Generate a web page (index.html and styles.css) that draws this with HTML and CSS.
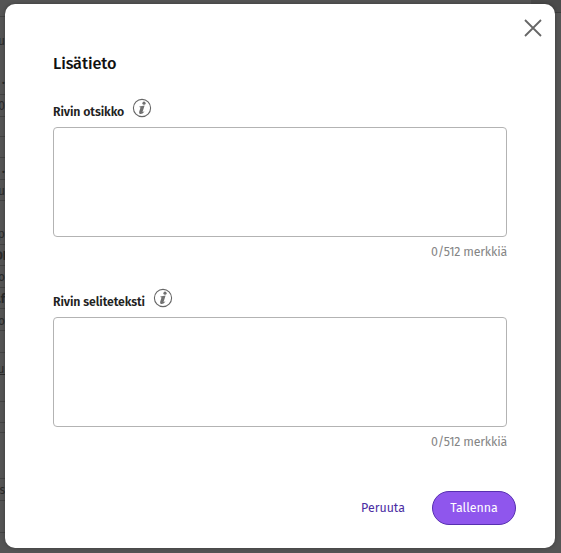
FILE: index.html
```
<!DOCTYPE html>
<html lang="fi">
<head>
    <meta charset="UTF-8">
    <title>Lisätieto</title>
    <link rel="stylesheet" href="styles.css">
</head>
<body>
    <div class="page">
        <div class="rows">
            <div class="row h17"></div>
            <div class="row h46 no-line"><span>cu</span></div>
            <div class="row h32"><b>.</b></div>
            <div class="row h22"><span>0</span></div>
            <div class="row h20"></div>
            <div class="row h22"></div>
            <div class="row h22"><b>.</b></div>
            <div class="row h22"><span>u</span></div>
            <div class="row h22 no-line"></div>
            <div class="row h22"><span>p</span></div>
            <div class="row h22"><b class="cut">DE</b></div>
            <div class="row h22"><span>o</span></div>
            <div class="row h22"><b>.f</b></div>
            <div class="row h22"><span>o</span></div>
            <div class="row h22"></div>
            <div class="row h32 no-line"><u class="cut">ur</u></div>
            <div class="row h17"></div>
            <div class="row h22"></div>
            <div class="row h10"></div>
            <div class="row h46"></div>
            <div class="row h22"><span>s</span></div>
            <div class="row h32"></div>
        </div>
        <div class="side"></div>
    </div>

    <div class="modal">
        <button class="close" aria-label="Sulje">
            <svg width="18" height="18" viewBox="0 0 18 18">
                <path d="M1 1 L17 17 M17 1 L1 17" />
            </svg>
        </button>

        <h1>Lisätieto</h1>

        <div class="field">
            <div class="label">
                <label for="title">Rivin otsikko</label>
                <svg class="info" width="20" height="20" viewBox="0 0 20 20">
                    <circle cx="10" cy="10" r="8.6" />
                    <circle class="dot" cx="12" cy="5.2" r="1.6" />
                    <path d="M7.4 8.4 L12.6 7.5 L10.6 13.8 Q10.5 14.6 12 13.2 L12.3 13.8 Q10.2 16.5 8 16 Q6.7 15.5 7.2 13.7 L8.5 9.4 L7.3 9.1 Z" />
                </svg>
            </div>
            <textarea id="title"></textarea>
            <p class="count">0/512 merkkiä</p>
        </div>

        <div class="field">
            <div class="label">
                <label for="text">Rivin seliteteksti</label>
                <svg class="info" width="20" height="20" viewBox="0 0 20 20">
                    <circle cx="10" cy="10" r="8.6" />
                    <circle class="dot" cx="12" cy="5.2" r="1.6" />
                    <path d="M7.4 8.4 L12.6 7.5 L10.6 13.8 Q10.5 14.6 12 13.2 L12.3 13.8 Q10.2 16.5 8 16 Q6.7 15.5 7.2 13.7 L8.5 9.4 L7.3 9.1 Z" />
                </svg>
            </div>
            <textarea id="text"></textarea>
            <p class="count">0/512 merkkiä</p>
        </div>

        <div class="buttons">
            <button class="cancel">Peruuta</button>
            <button class="save">Tallenna</button>
        </div>
    </div>
</body>
</html>
```

FILE: styles.css
```
* {
    box-sizing: border-box;
    margin: 0;
    padding: 0;
}

html, body {
    width: 100%;
    height: 100%;
    overflow: hidden;
}

body, button, textarea {
    font-family: "Fira Sans", "Noto Sans", sans-serif;
}

.page {
    display: flex;
    justify-content: space-between;
    height: 100%;
    background-color: #555;
}

/* page behind the dialog */
.rows {
    width: 5px;
    overflow: hidden;
}

.row {
    display: flex;
    align-items: center;
    justify-content: flex-end;
    padding-top: 2px;
    border-bottom: 1px solid #444;
    color: #2a2a2a;
    font-size: 12px;
    line-height: 14px;
}

.row .cut {
    margin-right: -4px;
}

.no-line {
    border-color: transparent;
}

.h10 { height: 10px; }
.h17 { height: 17px; }
.h20 { height: 20px; }
.h22 { height: 21.6px; }
.h32 { height: 32px; }
.h46 { height: 46px; }

.side {
    width: 30px;
    height: 13px;
    background-color: #4b4b4b;
    border-bottom: 1px solid #3c3c3c;
}

.modal {
    position: absolute;
    top: 4px;
    left: 5px;
    width: 550px;
    height: 544px;
    padding: 48px 48px 0;
    background-color: #fff;
    border-radius: 10px;
    box-shadow: 0 0 4px rgba(0, 0, 0, 0.3);
}

button {
    border: none;
    background: none;
}

.close {
    position: absolute;
    top: 15px;
    right: 13px;
    width: 18px;
    height: 18px;
}

.close svg {
    display: block;
    fill: none;
    stroke: #666;
    stroke-width: 1.8;
}

h1 {
    height: 24px;
    color: #111;
    font-size: 16.3px;
    font-weight: 500;
    line-height: 24px;
    letter-spacing: -0.1px;
}

.field {
    height: 168px;
    margin-top: 22px;
}

.field:nth-of-type(1) {
    margin-top: 21px;
}

.label {
    display: flex;
    gap: 8px;
    height: 30px;
}

.label label {
    padding-top: 5px;
    color: #222;
    font-size: 12.3px;
    font-weight: 600;
    line-height: 20px;
    letter-spacing: -0.1px;
}

.info {
    margin-top: 1px;
    fill: none;
    stroke: #666;
    stroke-width: 1.1;
}

.info path, .info .dot {
    fill: #707070;
    stroke: none;
}

textarea {
    display: block;
    width: 454px;
    height: 110px;
    border: 1px solid #b3b3b3;
    border-radius: 4px;
    resize: none;
}

.count {
    margin-top: 5px;
    color: #858585;
    font-size: 12.4px;
    line-height: 20px;
    letter-spacing: -0.2px;
    text-align: right;
}

.buttons {
    display: flex;
    justify-content: flex-end;
    align-items: center;
    gap: 27px;
    margin: 36px -9px 0 0;
}

.buttons button {
    padding-bottom: 2px;
    font-size: 12.4px;
    font-weight: 400;
    letter-spacing: 0;
}

.buttons .cancel {
    color: #4b2da3;
}

.save {
    width: 84px;
    height: 34px;
    border: 1px solid #5730b0;
    border-radius: 17px;
    background-color: #8f56ed;
    color: #fff;
}
```
